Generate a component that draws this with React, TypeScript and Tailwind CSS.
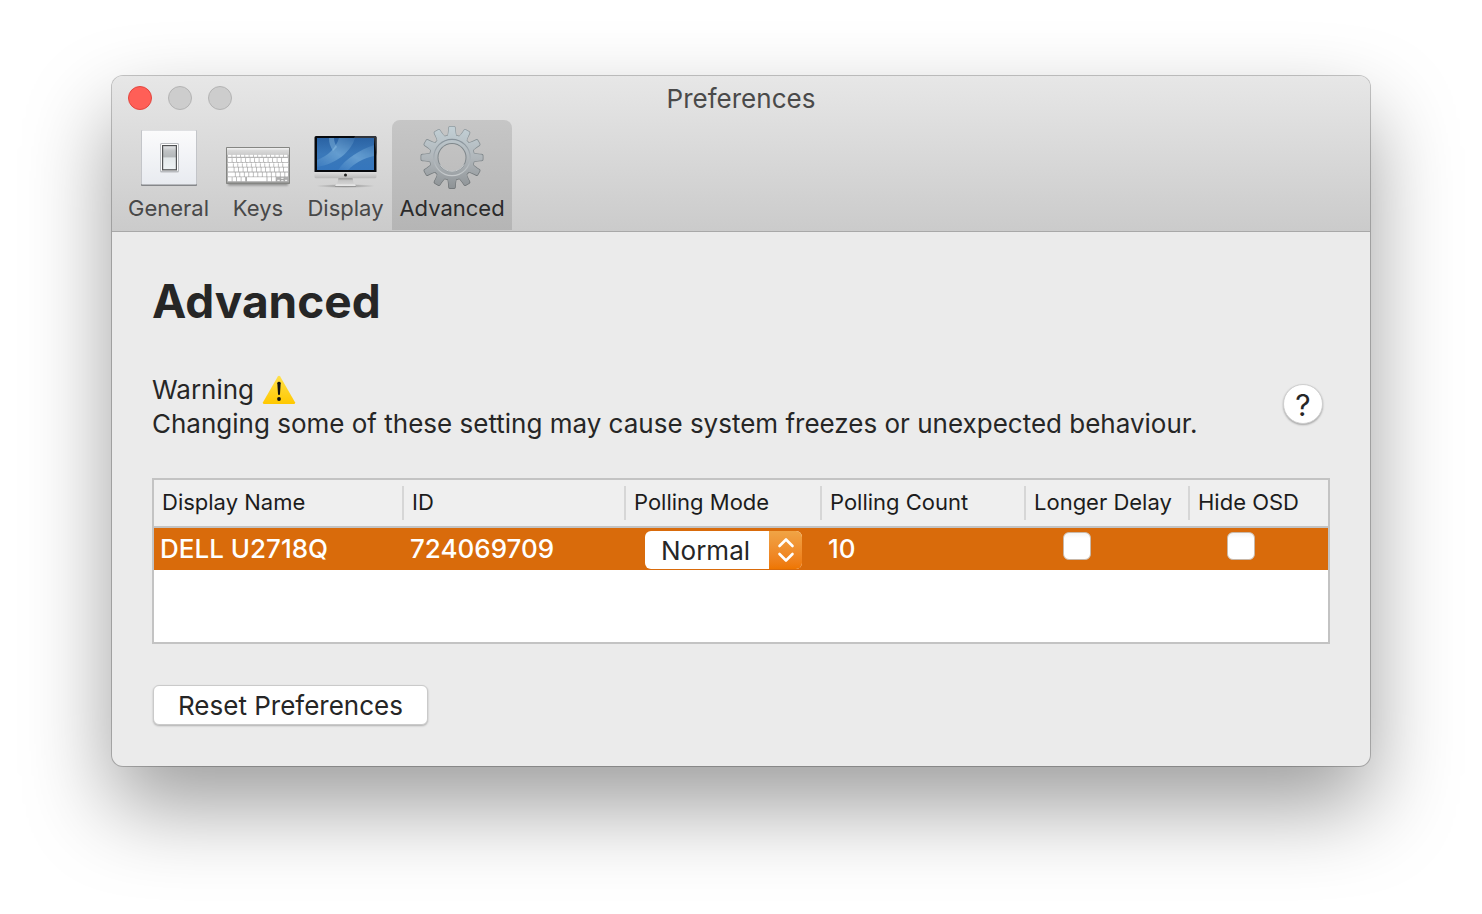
import { useState } from "react";
import type { ReactNode } from "react";

function GeneralIcon() {
  return (
    <svg viewBox="0 0 64 64" className="size-16" aria-hidden="true">
      <defs>
        <linearGradient id="plate" x1="0" y1="0" x2="0" y2="1">
          <stop offset="0" stopColor="#fbfbfc" />
          <stop offset="1" stopColor="#e8ebf0" />
        </linearGradient>
        <linearGradient id="rocker" x1="0" y1="0" x2="0" y2="1">
          <stop offset="0" stopColor="#e4e6e8" />
          <stop offset="0.2" stopColor="#c0c3c5" />
          <stop offset="0.45" stopColor="#b4b8ba" />
          <stop offset="0.52" stopColor="#e3e8ea" />
          <stop offset="1" stopColor="#eef2f4" />
        </linearGradient>
      </defs>
      <rect x="4" y="4" width="56" height="56" rx="1" fill="#c3c5c9" />
      <rect x="4" y="58" width="56" height="2" rx="1" fill="#85878a" />
      <rect x="5" y="4.500" width="54" height="54" rx="0.500" fill="url(#plate)" />
      <rect x="23" y="17" width="19" height="29.500" rx="1.500" fill="#b9bcc0" />
      <rect x="24" y="18" width="17" height="27" rx="1" fill="#fff" />
      <rect x="25" y="19" width="15" height="25.500" fill="#505254" />
      <rect x="26.200" y="20.200" width="12.600" height="23" fill="url(#rocker)" />
    </svg>
  );
}

function KeysIcon() {
  const rows = [0, 1, 2, 3];
  return (
    <svg viewBox="0 0 64 64" className="size-16" aria-hidden="true">
      <defs>
        <linearGradient id="deck" x1="0" y1="0" x2="0" y2="1">
          <stop offset="0" stopColor="#e2e2e2" />
          <stop offset="0.18" stopColor="#cdcdcd" />
          <stop offset="0.22" stopColor="#b4b4b4" />
          <stop offset="1" stopColor="#adadad" />
        </linearGradient>
        <filter id="deckShadow" x="-10%" y="-10%" width="120%" height="140%">
          <feGaussianBlur stdDeviation="1" />
        </filter>
      </defs>
      <rect x="2" y="54" width="60" height="5.500" fill="#8f8f8f" filter="url(#deckShadow)" />
      <rect x="0" y="21" width="64" height="37" rx="0.800" fill="#858683" />
      <rect x="1" y="22" width="62" height="34.500" fill="url(#deck)" />
      <rect x="1" y="22" width="62" height="1.500" fill="#ededed" />
      {Array.from({ length: 14 }, (_, i) => (
        <rect key={i} x={2 + i * 4.3} y="28.800" width="3.500" height="2" fill="#fff" />
      ))}
      {rows.map((r) =>
        Array.from({ length: 13 }, (_, i) => {
          const shift = [0, 1.2, 2, 3.2][r];
          return (
            <rect
              key={`${r}-${i}`}
              x={i === 0 ? 2 : 2 + i * 4.5 + shift}
              y={32 + r * 4.8}
              width={i === 0 ? 3.7 + shift : i === 12 ? 6 - shift : 3.7}
              height="4"
              rx="0.400"
              fill="#fff"
            />
          );
        }),
      )}
      {[2, 6.5, 11, 15.5].map((x) => (
        <rect key={x} x={x} y="51.200" width="3.700" height="4" fill="#fff" />
      ))}
      <rect x="21" y="51.200" width="19.500" height="4" fill="#fff" />
      <rect x="41.500" y="51.200" width="3.700" height="4" fill="#fff" />
      <rect x="46" y="51.200" width="3.700" height="4" fill="#fff" />
      <path d="M51 53.500h3v1.700h-3zM54.800 51.500h3v1.600h-3zM54.800 53.700h3v1.500h-3zM58.600 53.500h3v1.700h-3z" fill="#fff" stroke="#8d8d8d" strokeWidth="0.400" />
    </svg>
  );
}

function DisplayIcon() {
  return (
    <svg viewBox="0 0 64 64" className="size-16" aria-hidden="true">
      <defs>
        <linearGradient id="wall" x1="0" y1="0" x2="0" y2="1">
          <stop offset="0" stopColor="#2a62a3" />
          <stop offset="0.500" stopColor="#3a78b9" />
          <stop offset="1" stopColor="#3576bd" />
        </linearGradient>
        <linearGradient id="chin" x1="0" y1="0" x2="0" y2="1">
          <stop offset="0" stopColor="#e2e2e2" />
          <stop offset="1" stopColor="#b9b9b9" />
        </linearGradient>
        <linearGradient id="beam" x1="0" y1="1" x2="1" y2="0">
          <stop offset="0" stopColor="#a4d4f2" stopOpacity="0.050" />
          <stop offset="0.500" stopColor="#a4d4f2" stopOpacity="0.400" />
          <stop offset="1" stopColor="#a4d4f2" stopOpacity="0.100" />
        </linearGradient>
        <linearGradient id="stand" x1="0" y1="0" x2="0" y2="1">
          <stop offset="0" stopColor="#8f8f8f" />
          <stop offset="0.400" stopColor="#c6c6c6" />
          <stop offset="1" stopColor="#d4d4d4" />
        </linearGradient>
        <radialGradient id="floor">
          <stop offset="0" stopColor="#6f6f6f" stopOpacity="0.700" />
          <stop offset="1" stopColor="#6f6f6f" stopOpacity="0" />
        </radialGradient>
        <filter id="soft" x="-10%" y="-10%" width="120%" height="120%">
          <feGaussianBlur stdDeviation="0.700" />
        </filter>
        <clipPath id="screen">
          <rect x="3" y="12" width="57" height="32" />
        </clipPath>
      </defs>
      <ellipse cx="31.500" cy="60" rx="30" ry="2" fill="url(#floor)" />
      <path d="M24.500 52h14l1.500 6.500H23z" fill="url(#stand)" />
      <path d="M22 58.300h19l1 2h-21z" fill="#e6e6e6" />
      <path d="M21 60h21v.8H21z" fill="#8b8b8b" />
      <path d="M0.500 45.500h62v5.200a1.500 1.500 0 0 1-1.500 1.500h-59a1.500 1.500 0 0 1-1.500-1.500z" fill="url(#chin)" />
      <path d="M2 10h59a1.500 1.500 0 0 1 1.500 1.500V46H0.500V11.500A1.500 1.500 0 0 1 2 10z" fill="#07090d" />
      <path d="M41 10h20a1.500 1.500 0 0 1 1.500 1.500V30L60 12H40z" fill="#30343b" />
      <rect x="3" y="12" width="57" height="32" fill="url(#wall)" />
      <g clipPath="url(#screen)">
        <g filter="url(#soft)">
          <path d="M3 34C14 30 22 22 25 12h16C37 26 22 38 3 41z" fill="url(#beam)" />
          <path d="M24 44C32 32 46 24 60 19v11C49 32 40 38 34 44z" fill="url(#beam)" />
          <path d="M15 12c0 5 1 8 4 13l4-4c-2-3-3-6-3-9z" fill="#a4d4f2" fillOpacity="0.350" />
        </g>
      </g>
      <circle cx="31.500" cy="49" r="1.500" fill="#222" />
    </svg>
  );
}

function GearIcon() {
  return (
    <svg viewBox="0 0 64 64" className="size-16" aria-hidden="true">
      <defs>
        <linearGradient id="steel" x1="0" y1="0" x2="0" y2="1">
          <stop offset="0" stopColor="#c3d1d7" />
          <stop offset="0.500" stopColor="#b0b6ba" />
          <stop offset="1" stopColor="#8c9194" />
        </linearGradient>
        <linearGradient id="edge" x1="0" y1="0" x2="0" y2="1">
          <stop offset="0" stopColor="#8f9a9f" />
          <stop offset="1" stopColor="#6c7072" />
        </linearGradient>
        <linearGradient id="rim" x1="0" y1="0" x2="0" y2="1">
          <stop offset="0" stopColor="#87929a" />
          <stop offset="1" stopColor="#c6cacc" />
        </linearGradient>
        <clipPath id="teeth">
          {Array.from({ length: 12 }, (_, i) => (
            <path key={i} d="M26.500 12C28 10 28.600 7 28.900 2.200Q29 .8 30.200.8h3.600Q35 .8 35.100 2.200C35.400 7 36 10 37.500 12z" transform={`rotate(${i * 30} 32 31.500)`} />
          ))}
          <circle cx="32" cy="31.500" r="22.200" />
        </clipPath>
        <clipPath id="teethOuter">
          {Array.from({ length: 12 }, (_, i) => (
            <path key={i} d="M26 12.500C27.500 10.500 28 7 28.200 1.800Q28.300 0 30 0h4q1.700 0 1.800 1.800C36 7 36.500 10.500 38 12.500z" transform={`rotate(${i * 30} 32 31.500)`} />
          ))}
          <circle cx="32" cy="31.500" r="22.900" />
        </clipPath>
        <mask id="hole">
          <rect width="64" height="64" fill="#fff" />
          <circle cx="32" cy="31.500" r="13.500" fill="#000" />
        </mask>
      </defs>
      <g mask="url(#hole)">
        <rect width="64" height="64" fill="url(#edge)" clipPath="url(#teethOuter)" />
        <rect width="64" height="64" fill="url(#steel)" clipPath="url(#teeth)" />
        <circle cx="32" cy="31.500" r="18.200" fill="none" stroke="url(#rim)" strokeWidth="1.200" />
        <circle cx="32" cy="31.500" r="13.800" fill="none" stroke="#7f878b" strokeWidth="1.400" />
      </g>
      <path d="M20 38.500a13.900 13.900 0 0 0 24 0" fill="none" stroke="#d8dbdc" strokeWidth="0.800" />
    </svg>
  );
}

function WarningIcon() {
  return (
    <svg viewBox="0 0 34 30" className="h-[30px] w-[34px]" role="img" aria-label="Warning sign">
      <defs>
        <linearGradient id="caution" x1="0" y1="0" x2="0" y2="1">
          <stop offset="0" stopColor="#ffe04a" />
          <stop offset="1" stopColor="#ffc800" />
        </linearGradient>
      </defs>
      <path d="M15.800 1.500Q17 0 18.200 1.500L33 27.300Q33.600 29 32 29H2Q.4 29 1 27.300z" fill="url(#caution)" />
      <path d="M15.300 8.200Q15.400 6.800 17 6.800t1.700 1.400L18 19.300Q17.900 20 17 20t-1-.7z" fill="#111" />
      <circle cx="17" cy="24" r="1.900" fill="#111" />
    </svg>
  );
}

function ToolbarTab({
  label,
  width,
  active,
  onSelect,
  children,
}: {
  label: string;
  width: string;
  active: boolean;
  onSelect: () => void;
  children: ReactNode;
}) {
  return (
    <button
      type="button"
      aria-pressed={active}
      onClick={onSelect}
      className={`flex h-[110px] flex-col items-center gap-1 rounded-t-lg pt-1.5 text-[22px] leading-7 ${width} ${
        active ? "bg-linear-to-b from-[#c6c6c6] to-[#b5b5b5] text-[#2b2b2b]" : "text-[#484848]"
      }`}
    >
      {children}
      <span>{label}</span>
    </button>
  );
}

const tabs = [
  { label: "General", width: "w-[97px]", icon: <GeneralIcon /> },
  { label: "Keys", width: "w-[82px]", icon: <KeysIcon /> },
  { label: "Display", width: "w-[93px]", icon: <DisplayIcon /> },
  { label: "Advanced", width: "w-[120px]", icon: <GearIcon /> },
];

const columns = [
  { label: "Display Name", width: "w-[250px]" },
  { label: "ID", width: "w-[222px]" },
  { label: "Polling Mode", width: "w-[196px]" },
  { label: "Polling Count", width: "w-[204px]" },
  { label: "Longer Delay", width: "w-[164px]" },
  { label: "Hide OSD", width: "" },
];

const checkboxClass =
  "block size-7 appearance-none rounded-md border border-[#c9b8a8] bg-white bg-linear-to-b from-[#f4f4f4] to-white to-20% checked:from-[#f0a040] checked:to-[#ee7a00]";

export default function App() {
  const [tab, setTab] = useState("Advanced");
  return (
    <div className="min-h-screen bg-white px-28 pt-[76px] pb-36 font-['Inter',sans-serif] text-[#262626]">
      <main className="overflow-hidden rounded-[11px] bg-[#ebebeb] shadow-[0_0_0_1px_rgba(0,0,0,0.22),0_40px_86px_rgba(0,0,0,0.39)]">
        <header className="border-b border-[#a8a8a8] bg-linear-to-b from-[#e7e7e7] to-[#cbcbcb] pb-px">
          <div className="grid h-11 grid-cols-[1fr_auto_1fr] items-center px-4">
            <div className="flex gap-4">
              <button type="button" aria-label="Close" className="size-6 rounded-full border border-[#e2463f] bg-[#ff5f57]" />
              <button type="button" aria-label="Minimize" className="size-6 rounded-full border border-[#b3b3b3] bg-[#cdcdcd]" />
              <button type="button" aria-label="Zoom" className="size-6 rounded-full border border-[#b3b3b3] bg-[#cdcdcd]" />
            </div>
            <div className="pt-0.5 text-[26px] leading-8 text-[#4a4a4a]">Preferences</div>
          </div>
          <nav className="flex px-2">
            {tabs.map((t) => (
              <ToolbarTab key={t.label} label={t.label} width={t.width} active={tab === t.label} onSelect={() => setTab(t.label)}>
                {t.icon}
              </ToolbarTab>
            ))}
          </nav>
        </header>

        <section className="px-10 pt-[39px] pb-[41px]">
          <h1 className="text-[46px] leading-[60px] font-bold">Advanced</h1>
          <div className="mt-[42px] flex items-start justify-between pr-[7px]">
            <div className="text-[26px] leading-[34px]">
              <div className="flex items-center gap-2">
                <span>Warning</span>
                <WarningIcon />
              </div>
              <p>Changing some of these setting may cause system freezes or unexpected behaviour.</p>
            </div>
            <button
              type="button"
              aria-label="Help"
              className="mt-[11px] flex size-10 items-center justify-center rounded-full border border-[#cfcfcf] bg-white pt-0.5 text-[30px] leading-8 shadow-[0_1px_2px_rgba(0,0,0,0.3)]"
            >
              ?
            </button>
          </div>

          <div className="mt-[37px] h-[166px] border-2 border-[#c3c3c3] bg-white">
            <table className="w-full table-fixed border-separate border-spacing-0 text-left">
              <thead>
                <tr className="bg-[#efefef] text-[22px]">
                  {columns.map((c, i) => (
                    <th key={c.label} scope="col" className={`border-b-2 border-[#c3c3c3] p-0 py-1.5 font-normal text-[#1c1c1c] ${c.width}`}>
                      <div className={`h-[34px] pl-2 leading-8 whitespace-nowrap ${i < 5 ? "border-r-2 border-[#d6d6d6]" : ""}`}>
                        {c.label}
                      </div>
                    </th>
                  ))}
                </tr>
              </thead>
              <tbody>
                <tr className="h-[42px] bg-[#d96b0b] text-[26px] leading-[34px] font-medium text-white">
                  <td className="p-0 pl-1.5">DELL U2718Q</td>
                  <td className="p-0 pl-1.5">724069709</td>
                  <td className="p-0 pt-[3px] pl-[19px] align-top">
                    <div className="relative h-[38px] w-[157px] overflow-hidden rounded-md bg-white">
                      <select
                        aria-label="Polling mode"
                        defaultValue="Normal"
                        className="block h-full w-full appearance-none bg-white pt-px pl-4 font-normal text-[#262626] outline-none"
                      >
                        <option>Normal</option>
                        <option>Minimal</option>
                        <option>None</option>
                      </select>
                      <span className="pointer-events-none absolute inset-y-0 right-0 flex w-[33px] items-center justify-center bg-linear-to-b from-[#f0a445] to-[#ee7600]">
                        <svg viewBox="0 0 18 26" className="h-[26px] w-[18px]" fill="none" stroke="#fff" strokeWidth="2.600" strokeLinecap="round" strokeLinejoin="round" aria-hidden="true">
                          <path d="M2.500 9L9 2.500 15.500 9M2.500 17L9 23.500 15.500 17" />
                        </svg>
                      </span>
                    </div>
                  </td>
                  <td className="p-0 pl-1.5">10</td>
                  <td className="p-0 pt-1 pl-[37px] align-top">
                    <input type="checkbox" aria-label="Longer delay" className={checkboxClass} />
                  </td>
                  <td className="p-0 pt-1 pl-[37px] align-top">
                    <input type="checkbox" aria-label="Hide OSD" className={checkboxClass} />
                  </td>
                </tr>
              </tbody>
            </table>
          </div>

          <button
            type="button"
            className="mt-[41px] ml-px block h-10 rounded-md border border-[#cacaca] bg-white px-6 pt-0.5 text-[26px] leading-8 shadow-[0_1px_2px_rgba(0,0,0,0.25)]"
          >
            Reset Preferences
          </button>
        </section>
      </main>
    </div>
  );
}
